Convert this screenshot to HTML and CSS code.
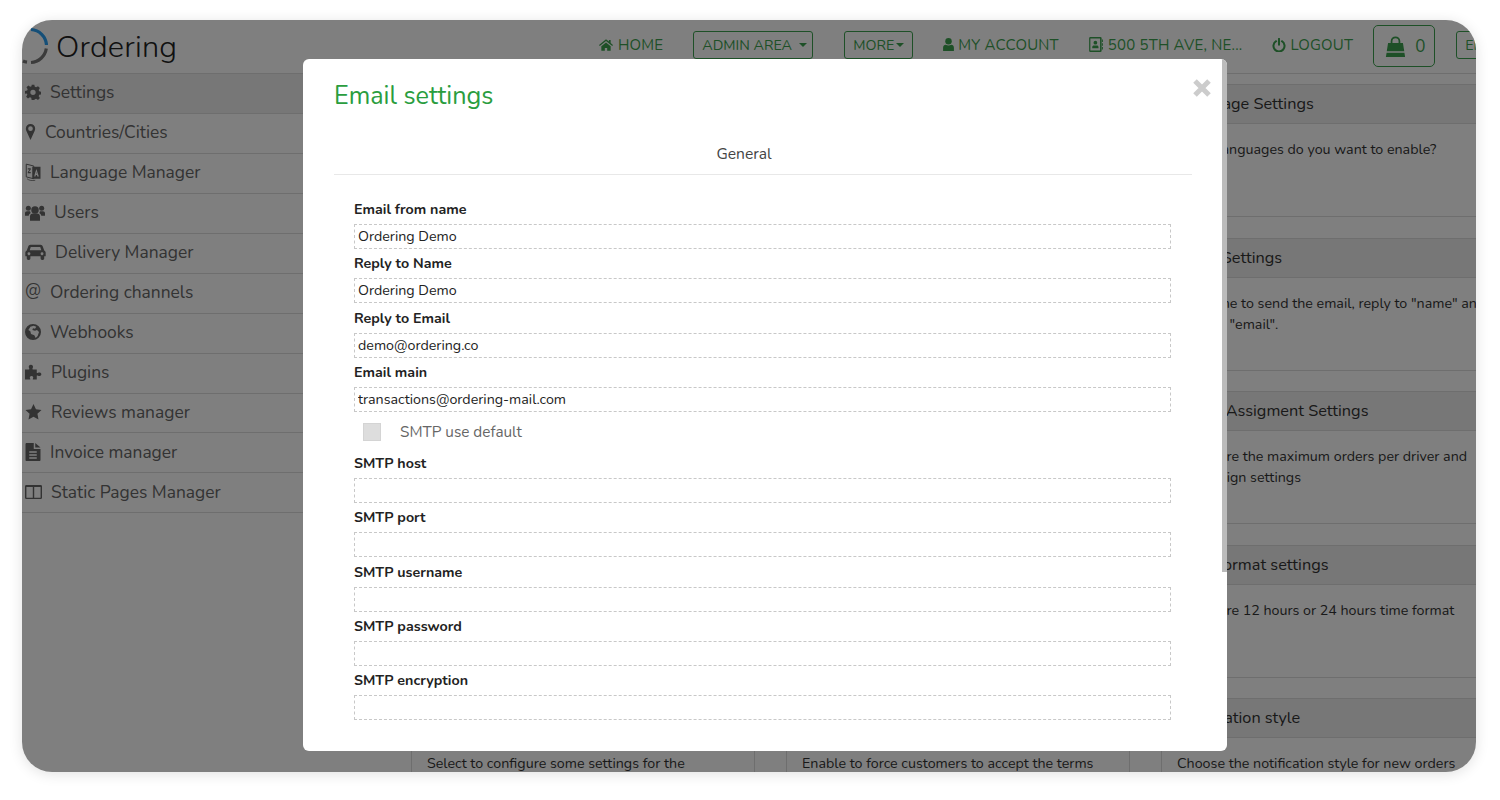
FILE: index.html
```html
<!DOCTYPE html>
<html lang="en">
<head>
<meta charset="utf-8">
<title>Email settings</title>
<link rel="stylesheet" href="styles.css">
</head>
<body>
<svg class="defs" aria-hidden="true">
  <symbol id="i-gear" viewBox="0 0 24 24"><path fill-rule="evenodd" d="M10 1h4l.7 3.200 2 .8L19.500 3.300l2.800 2.800-1.800 2.800.8 2 3.200.7v4l-3.200.7-.8 2 1.800 2.800-2.800 2.800-2.800-1.800-2 .8L14 24h-4l-.7-3.200-2-.8-2.800 1.800-2.800-2.800 1.800-2.800-.8-2L0 14.500v-4l3.200-.7.8-2L2.200 5 5 2.300l2.800 1.800 2-.8zM12 8.500a4 4 0 1 0 0 8 4 4 0 0 0 0-8z"/></symbol>
  <symbol id="i-marker" viewBox="0 0 14 24"><path fill-rule="evenodd" d="M7 0a7 7 0 0 0-7 7c0 1.500.4 2.600 1 3.800L7 24l6-13.200c.6-1.200 1-2.300 1-3.800a7 7 0 0 0-7-7zm0 3.500a3.500 3.500 0 1 1 0 7 3.500 3.500 0 0 1 0-7z"/></symbol>
  <symbol id="i-lang" viewBox="0 0 20 24"><path d="M1 1.500l10 2.500v17l-10-2.500z" fill="none" stroke="currentColor" stroke-width="1.300"/><path fill-rule="evenodd" d="M9 5h11v16H9zM14.500 8l-3.200 10h2l.5-2h1.500l.5 2h2zM14.500 11.500l-.4 2.500h.8z"/><path d="M3 7h4v1.500L4.500 12H7v1.500H3V12l2.500-3.500H3z"/><path d="M2 21c3 2.500 7 3 11 2" fill="none" stroke="currentColor"/></symbol>
  <symbol id="i-users" viewBox="0 0 24 20"><circle cx="12" cy="7" r="4.500"/><circle cx="4" cy="5" r="3"/><circle cx="20" cy="5" r="3"/><path d="M6 20v-5c0-2.500 1.500-3.800 3.500-3.800h5c2 0 3.500 1.300 3.500 3.800v5zM0 14v-3c0-1.500 1-2.500 2.500-2.500h3.500l.8 2C5.500 11.500 4.500 12.500 4.500 14zM24 14v-3c0-1.500-1-2.500-2.500-2.500H18l-.8 2c1.300 1 2.300 2 2.300 3.500z"/></symbol>
  <symbol id="i-car" viewBox="0 0 28 22"><path fill-rule="evenodd" d="M7 1h14c1.500 0 2.500 1 3 2.500L26 9c1.300.6 2 1.800 2 3v5h-2v3a2 2 0 0 1-2 2h-1a2 2 0 0 1-2-2v-3H7v3a2 2 0 0 1-2 2H4a2 2 0 0 1-2-2v-3H0v-5c0-1.200.7-2.400 2-3l2-5.500C4.500 2 5.500 1 7 1zm.5 3L6 8.500h16L20.500 4zM5 11.500a2 2 0 1 0 0 4 2 2 0 0 0 0-4zm18 0a2 2 0 1 0 0 4 2 2 0 0 0 0-4z"/></symbol>
  <symbol id="i-globe" viewBox="0 0 24 24"><path fill-rule="evenodd" d="M12 0a12 12 0 1 0 0 24 12 12 0 0 0 0-24zM8 4l5-1.500L17 4l-2 3-3-.5-1 2.500 4 1 3-1 3 3-2 6-3 3-2-4-5-2-1-4-3-2 2-3z"/></symbol>
  <symbol id="i-puzzle" viewBox="0 0 26 24"><path d="M0 8h6c.8 0 .8-1 .2-2C5 4 6 1 9 1s4 3 2.800 5c-.6 1-.6 2 .2 2h6v5c0 .8 1 .8 2 .2 2-1.200 5-.2 5 2.300s-3 3.500-5 2.300c-1-.6-2-.6-2 .2v5.500h-5.500c-.8 0-.8-1-.2-2 1-1.700-.3-3.500-2.300-3.500s-3.300 1.800-2.300 3.500c.6 1 .6 2-.2 2H0z"/></symbol>
  <symbol id="i-star" viewBox="0 0 24 24"><path d="M12 0l3.700 8 8.300 1-6.100 5.700 1.600 8.600L12 19l-7.500 4.300 1.600-8.600L0 9l8.300-1z"/></symbol>
  <symbol id="i-file" viewBox="0 0 20 24"><path fill-rule="evenodd" d="M0 1.500C0 .7.700 0 1.500 0H11v8h9v14.500c0 .8-.7 1.500-1.500 1.500h-17C.7 24 0 23.300 0 22.500zM5 11v2h10v-2zM5 15v2h10v-2zM5 19v2h10v-2z"/><path d="M13 0l7 6h-7z"/></symbol>
  <symbol id="i-columns" viewBox="0 0 24 20"><path fill-rule="evenodd" d="M2 0h20a2 2 0 0 1 2 2v16a2 2 0 0 1-2 2H2a2 2 0 0 1-2-2V2a2 2 0 0 1 2-2zm0 3v15h9V3zm11 0v15h9V3z"/></symbol>
  <symbol id="i-home" viewBox="0 0 24 20"><path d="M12 0l5 4.200V1.500h3v5.200l4 3.300-1.300 1.500L12 3 1.300 11.500 0 10zM4 12l8-6.500 8 6.500v8h-6v-5h-4v5H4z"/></symbol>
  <symbol id="i-user" viewBox="0 0 20 24"><circle cx="10" cy="6" r="6"/><path d="M0 24v-6c0-3.500 2-5.500 5-5.500 1.500 1 3 1.500 5 1.500s3.500-.5 5-1.500c3 0 5 2 5 5.500v6z"/></symbol>
  <symbol id="i-book" viewBox="0 0 22 24"><path fill-rule="evenodd" d="M2 0h16a2 2 0 0 1 2 2v20a2 2 0 0 1-2 2H2a2 2 0 0 1-2-2V2a2 2 0 0 1 2-2zm0 2.500v19h15.500v-19z"/><circle cx="10" cy="9" r="3"/><path d="M5 18v-2c0-1.500 1-2.500 2.500-2.500h5c1.500 0 2.500 1 2.500 2.500v2zM20.500 4H22v4h-1.500zM20.500 10H22v4h-1.500zM20.500 16H22v4h-1.500z"/></symbol>
  <symbol id="i-power" viewBox="0 0 24 24"><path d="M7 5.500a9.500 9.500 0 1 0 10 0" fill="none" stroke="currentColor" stroke-width="3.500" stroke-linecap="round"/><path d="M12 1.500v10" fill="none" stroke="currentColor" stroke-width="3.500" stroke-linecap="round"/></symbol>
  <symbol id="i-bag" viewBox="0 0 24 24"><path d="M7.500 9V6a4.500 4.500 0 0 1 9 0v3" fill="none" stroke="currentColor" stroke-width="2"/><path d="M3.500 8h17l1.500 9.500H2zM1.800 19h20.400l.8 5H1z"/></symbol>
</svg>

<div class="frame">
  <header class="topbar">
    <div class="brand">
      <svg class="brand-mark" viewBox="0 0 26 40" aria-hidden="true">
        <path class="arc-blue" d="M9 2.500A16.500 16.500 0 0 1 24.500 18"/>
        <path class="arc-grey" d="M24.300 21.500A16.500 16.500 0 0 1 9 35.500"/>
        <path class="arc-grey" d="M5 35.200A16.500 16.500 0 0 1 1 34"/>
      </svg>
      <span class="brand-name">Ordering</span>
    </div>
    <nav class="nav">
      <a class="nav-link"><svg class="nav-ico home"><use href="#i-home"/></svg>HOME</a>
      <a class="nav-btn admin">ADMIN AREA<span class="caret wide"></span></a>
      <a class="nav-btn more">MORE<span class="caret"></span></a>
      <a class="nav-link"><svg class="nav-ico user"><use href="#i-user"/></svg>MY ACCOUNT</a>
      <a class="nav-link"><svg class="nav-ico book"><use href="#i-book"/></svg>500 5TH AVE, NE...</a>
      <a class="nav-link"><svg class="nav-ico power"><use href="#i-power"/></svg>LOGOUT</a>
      <a class="cart"><svg class="cart-ico"><use href="#i-bag"/></svg>0</a>
      <a class="nav-btn lang">EN</a>
    </nav>
  </header>

  <div class="body-row">
    <aside class="sidebar">
      <a class="side-item active"><svg class="w16"><use href="#i-gear"/></svg>Settings</a>
      <a class="side-item"><svg class="w11"><use href="#i-marker"/></svg>Countries/Cities</a>
      <a class="side-item"><svg class="w16 tall"><use href="#i-lang"/></svg>Language Manager</a>
      <a class="side-item"><svg class="w20 mid"><use href="#i-users"/></svg>Users</a>
      <a class="side-item"><svg class="w21"><use href="#i-car"/></svg>Delivery Manager</a>
      <a class="side-item"><span class="at">@</span>Ordering channels</a>
      <a class="side-item"><svg class="w16"><use href="#i-globe"/></svg>Webhooks</a>
      <a class="side-item"><svg class="w17"><use href="#i-puzzle"/></svg>Plugins</a>
      <a class="side-item"><svg class="w17"><use href="#i-star"/></svg>Reviews manager</a>
      <a class="side-item"><svg class="w16 tall"><use href="#i-file"/></svg>Invoice manager</a>
      <a class="side-item"><svg class="w17"><use href="#i-columns"/></svg>Static Pages Manager</a>
    </aside>

    <main class="cards">
      <section class="card"><h3 class="card-head"></h3></section>
      <section class="card"><h3 class="card-head"></h3></section>
      <section class="card"><h3 class="card-head">Language Settings</h3><p class="card-text">What languages do you want to enable?</p></section>
      <section class="card"><h3 class="card-head"></h3></section>
      <section class="card"><h3 class="card-head"></h3></section>
      <section class="card"><h3 class="card-head">Email Settings</h3><p class="card-text">Set name to send the email, reply to "name" and reply to "email".</p></section>
      <section class="card"><h3 class="card-head"></h3></section>
      <section class="card"><h3 class="card-head"></h3></section>
      <section class="card"><h3 class="card-head">Driver Assigment Settings</h3><p class="card-text">Configure the maximum orders per driver and autoassign settings</p></section>
      <section class="card"><h3 class="card-head"></h3></section>
      <section class="card"><h3 class="card-head"></h3></section>
      <section class="card"><h3 class="card-head">Time format settings</h3><p class="card-text">Configure 12 hours or 24 hours time format</p></section>
      <section class="card"><h3 class="card-head"></h3><p class="card-text">Select to configure some settings for the</p></section>
      <section class="card"><h3 class="card-head"></h3><p class="card-text">Enable to force customers to accept the terms</p></section>
      <section class="card"><h3 class="card-head">Notification style</h3><p class="card-text">Choose the notification style for new orders</p></section>
    </main>
  </div>

  <div class="overlay"></div>

  <div class="modal">
    <h2 class="modal-title">Email settings</h2>
    <svg class="close" viewBox="0 0 20 20" aria-label="Close"><path d="M3 3l14 14M17 3L3 17"/></svg>
    <div class="tab">General</div>
    <form class="form">
      <label class="lbl">Email from name</label>
      <input class="field" value="Ordering Demo">
      <label class="lbl">Reply to Name</label>
      <input class="field" value="Ordering Demo">
      <label class="lbl">Reply to Email</label>
      <input class="field" value="demo@ordering.co">
      <label class="lbl">Email main</label>
      <input class="field" value="transactions@ordering-mail.com">
      <div class="check-row"><span class="check"></span><span class="check-text">SMTP use default</span></div>
      <label class="lbl">SMTP host</label>
      <input class="field">
      <label class="lbl">SMTP port</label>
      <input class="field">
      <label class="lbl">SMTP username</label>
      <input class="field">
      <label class="lbl">SMTP password</label>
      <input class="field">
      <label class="lbl">SMTP encryption</label>
      <input class="field">
    </form>
    <div class="thumb"></div>
  </div>
</div>
</body>
</html>
```
FILE: styles.css
```css
* { box-sizing: border-box; }
html, body { height: 100%; }
body {
  margin: 0;
  padding: 20px 24px 28px 22px;
  background: #fff;
  overflow: hidden;
  font-family: "Nunito", "Lato", "Noto Sans", sans-serif;
  color: #333;
}
.defs { display: none; }

.frame {
  position: relative;
  width: 1454px;
  height: 752px;
  border-radius: 30px;
  overflow: hidden;
  background: #fff;
  display: flex;
  flex-direction: column;
  box-shadow: 0 2px 14px rgba(0, 0, 0, .12);
}

/* top bar */
.topbar {
  flex: none;
  height: 54px;
  display: flex;
  align-items: flex-start;
  border-bottom: 1px solid #ddd;
}
.brand { flex: none; width: 577px; display: flex; align-items: center; height: 53px; }
.brand-mark { width: 26px; height: 40px; fill: none; stroke-width: 3.2; flex: none; margin-top: 1px; }
.arc-blue { stroke: #2a9ff0; }
.arc-grey { stroke: #777; }
.brand-name { margin-left: 8px; margin-top: 2px; font-size: 30.7px; font-weight: 300; color: #222; letter-spacing: .2px; line-height: 51px; }

.nav { flex: none; display: flex; align-items: flex-start; color: #3da14f; font-size: 15px; letter-spacing: .2px; white-space: nowrap; }
.nav-link { display: flex; align-items: center; height: 27px; margin-top: 11px; margin-right: 30px; }
.nav-ico { fill: currentColor; margin-right: 5px; flex: none; }
.nav-ico.home { width: 14px; height: 12px; }
.nav-ico.user { width: 11px; height: 13px; margin-right: 4px; }
.nav-ico.book { width: 14px; height: 15px; }
.nav-ico.power { width: 14px; height: 14px; margin-right: 4px; }
.nav-btn { display: flex; align-items: center; height: 28px; margin-top: 11px; border: 1px solid #3da14f; border-radius: 3px; padding: 0 7px 0 8px; font-size: 14.3px; letter-spacing: 0; }
.nav-btn.admin { width: 120px; margin-right: 31px; }
.nav-btn.more { width: 69px; margin-right: 30px; }
.nav-btn.lang { width: 50px; }
.caret { width: 0; height: 0; margin-left: 2px; border-left: 4px solid transparent; border-right: 4px solid transparent; border-top: 4px solid currentColor; }
.caret.wide { margin-left: 7px; }
.cart { display: flex; align-items: center; width: 62px; height: 42px; margin-top: 5px; margin-left: -10px; margin-right: 21px; padding-left: 11px; border: 1px solid #3da14f; border-radius: 5px; font-size: 17px; }
.cart-ico { width: 21px; height: 21px; margin-right: 9px; fill: currentColor; }

/* body */
.body-row { flex: 1; min-height: 0; display: flex; }
.sidebar { flex: none; width: 281px; }
.side-item {
  display: flex;
  align-items: center;
  gap: 9px;
  height: 39.95px;
  padding: 0 0 2px 3px;
  border-bottom: 1px solid #ddd;
  font-size: 17.4px;
  color: #666;
  white-space: nowrap;
}
.side-item svg { fill: currentColor; height: 16px; flex: none; }
.side-item svg.tall { height: 18px; }
.side-item svg.mid { height: 17px; }
.side-item.active { background: #eee; }
.w11 { width: 11px; }
.w16 { width: 16px; }
.w17 { width: 17px; }
.w20 { width: 20px; }
.w21 { width: 21px; }
.at { width: 16px; font-size: 17px; line-height: 1; margin-top: -4px; }

/* cards behind the modal */
.cards {
  flex: none;
  margin-left: 108px;
  padding-top: 10px;
  display: grid;
  grid-template-columns: repeat(3, 344px);
  grid-auto-rows: 133px;
  column-gap: 31px;
  row-gap: 20.5px;
}
.card { border: 1px solid #ddd; border-top: 0; overflow: hidden; }
.card-head { margin: 0; height: 40px; padding-left: 15px; background: #eee; border-top: 1px solid #ddd; border-bottom: 1px solid #ddd; font-size: 16.3px; font-weight: 400; line-height: 38px; color: #333; }
.card-text { margin: 15px 0 0; padding: 0 15px; font-size: 14.25px; line-height: 21px; color: #333; }

/* dim layer */
.overlay { position: absolute; inset: 0; background: rgba(0, 0, 0, .5); }

/* modal */
.modal {
  position: absolute;
  left: 281px;
  top: 39px;
  width: 924px;
  height: 692px;
  background: #fff;
  border-radius: 6px;
  padding: 19px 35px 0 31px;
  overflow: hidden;
}
.modal-title { margin: 0; font-size: 25.2px; font-weight: 400; line-height: 36px; color: #2a9d3e; }
.close { position: absolute; top: 19px; right: 15px; width: 20px; height: 20px; fill: none; stroke: #ccc; stroke-width: 5; }
.tab { margin-top: 21px; height: 40px; padding-top: 10px; padding-right: 38px; text-align: center; font-size: 15.6px; line-height: 19px; color: #444; border-bottom: 1px solid #e8e8e8; }
.form { display: flex; flex-direction: column; padding: 25px 21px 0 20px; }
.lbl { height: 19px; margin-top: 5.25px; margin-bottom: 5px; font-size: 14.25px; font-weight: 700; line-height: 19px; color: #222; }
.lbl:first-child { margin-top: 0; }
.field { height: 25px; width: 100%; padding: 0 3px; border: 1px dashed #c8c8c8; background: #fff; font: inherit; font-size: 14.25px; color: #222; outline: 0; }
.check-row { display: flex; align-items: center; height: 30px; margin-top: 5px; margin-bottom: 2px; padding-left: 9px; }
.check { width: 18px; height: 18px; background: #ddd; border: 1px solid #d4d4d4; }
.check-text { margin-left: 19px; font-size: 15.3px; color: #666; }
.thumb { position: absolute; top: 0; right: 0; width: 5px; height: 513px; background: #bbb; }
```
